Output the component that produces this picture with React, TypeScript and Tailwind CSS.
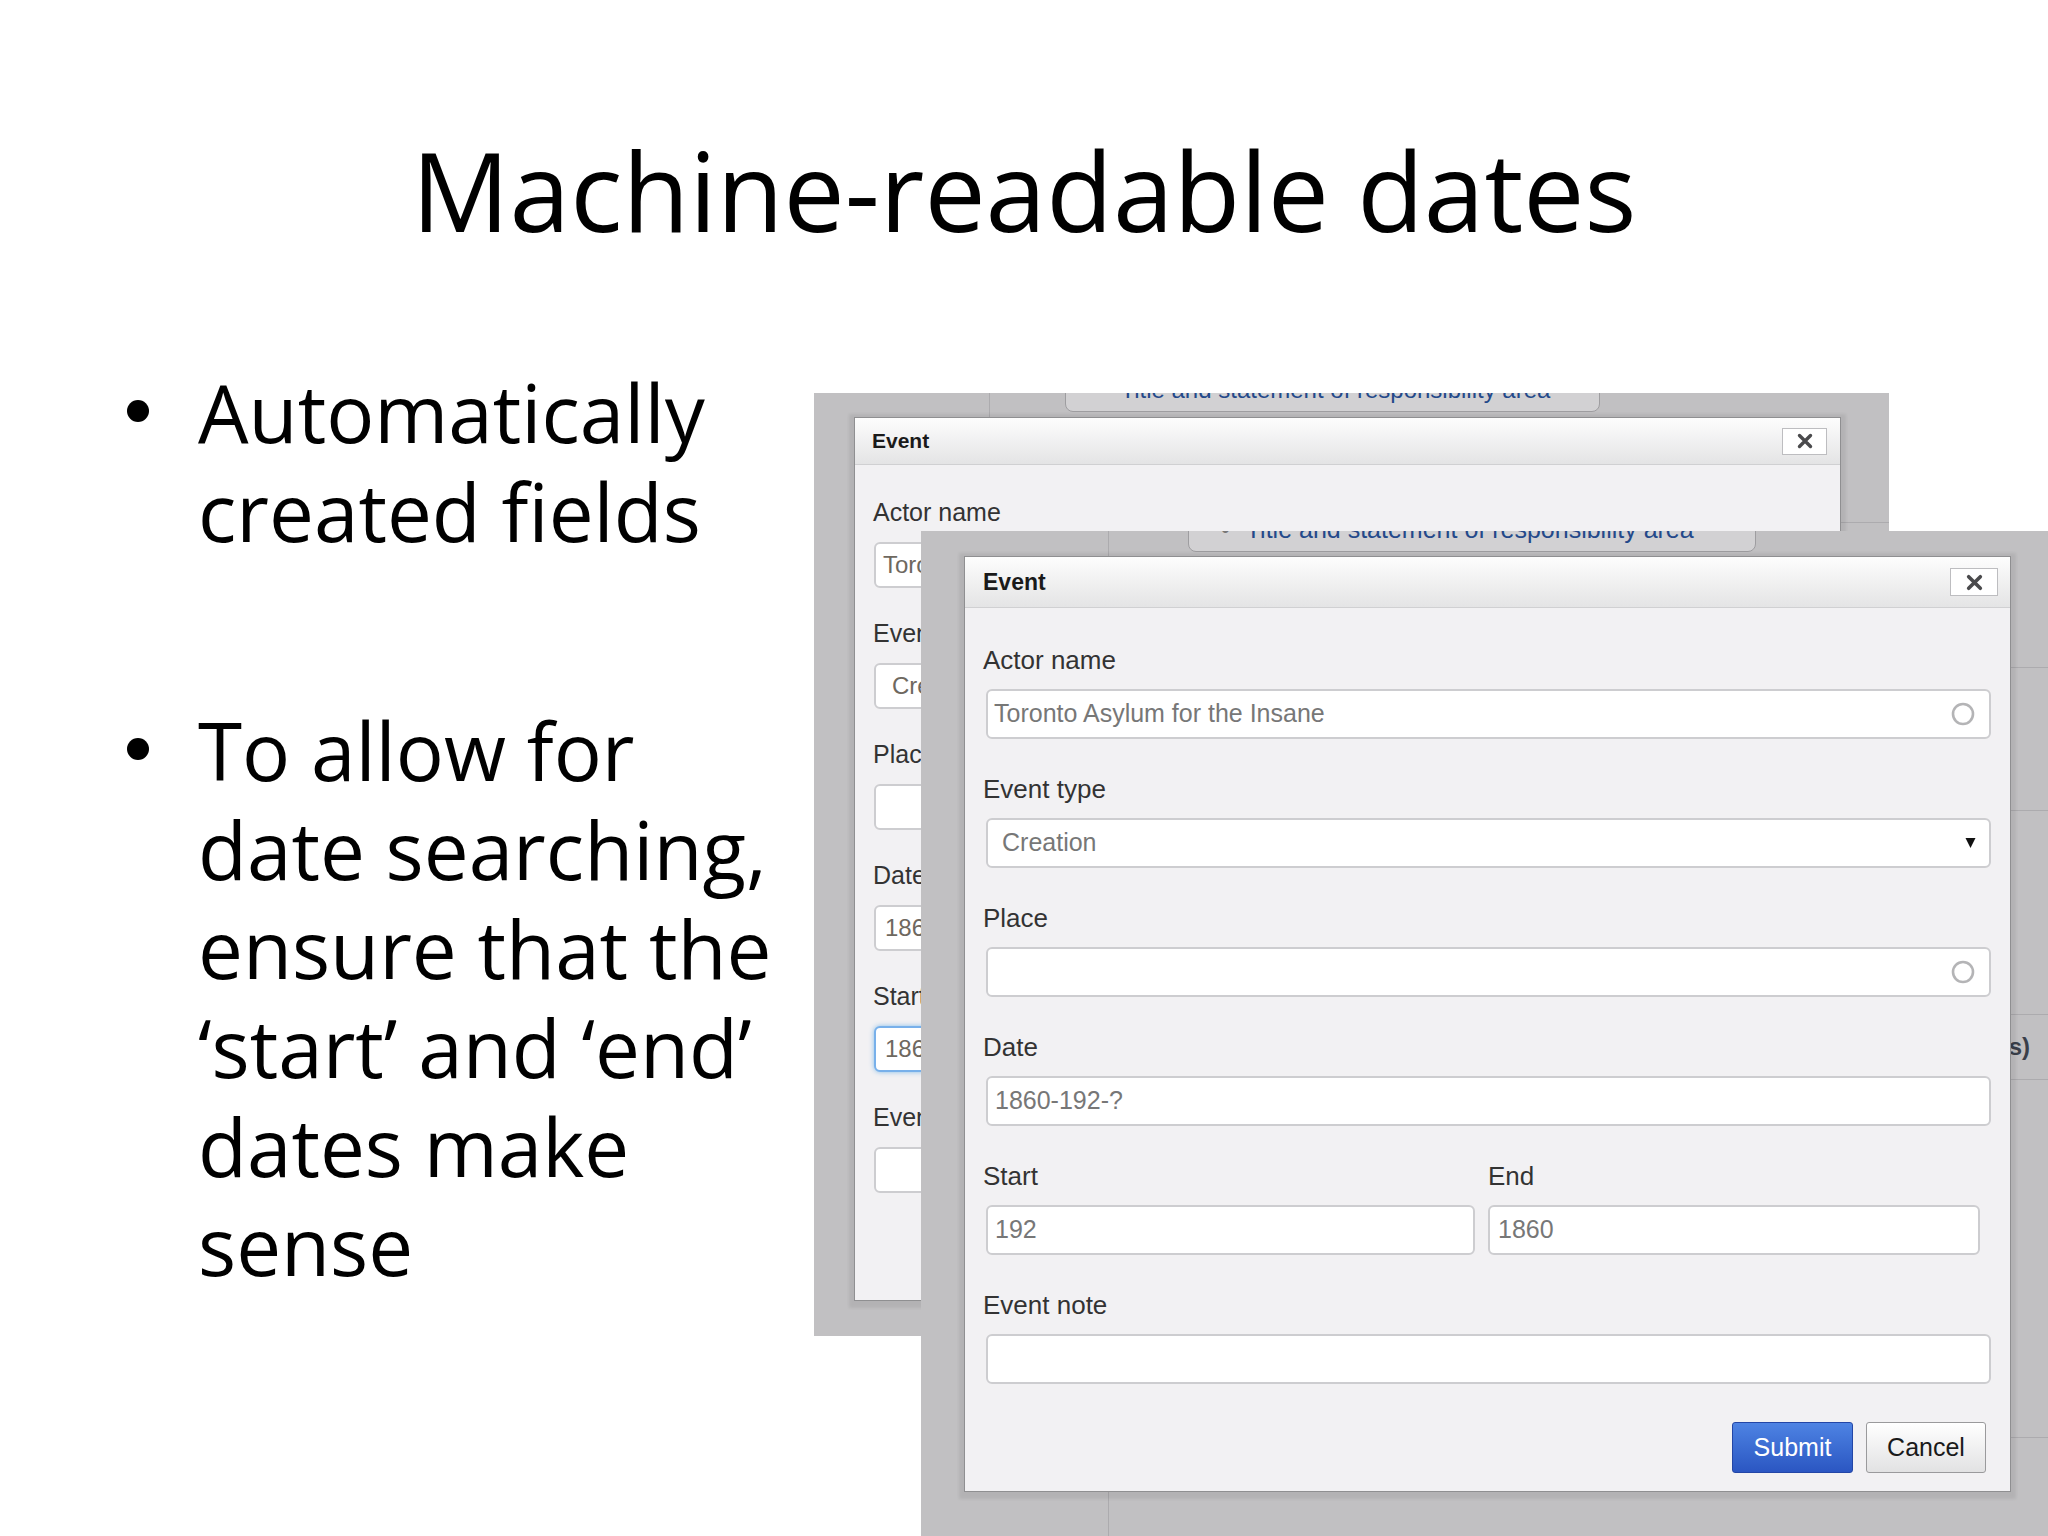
function CloseButton({ big }: { big?: boolean }) {
  return (
    <div
      className={
        big
          ? "flex h-[28px] w-[48px] items-center justify-center border border-[#bdbdc0] bg-white"
          : "flex h-[27px] w-[45px] items-center justify-center border border-[#bdbdc0] bg-white"
      }
    >
      <svg width={big ? 17 : 16} height={big ? 17 : 16} viewBox="0 0 16 16">
        <path d="M2.5 2.5 13.5 13.5M13.5 2.5 2.5 13.5" stroke="#4a4a4c" strokeWidth="3.4" strokeLinecap="round" />
      </svg>
    </div>
  );
}

function LookupCircle() {
  return (
    <svg width="26" height="26" viewBox="0 0 26 26" className="ml-auto mr-[13px] shrink-0">
      <circle cx="13" cy="13" r="10" fill="none" stroke="#b4b4b6" strokeWidth="2.6" />
    </svg>
  );
}

function SelectArrow() {
  return (
    <svg width="11" height="12" viewBox="0 0 11 12" className="ml-auto mr-[13px] shrink-0">
      <path d="M0.5 1h10L5.5 11z" fill="#111" />
    </svg>
  );
}

// background page of the CMS behind each modal: left nav, a tab at the top, ruled rows
function TitleTab({ back }: { back?: boolean }) {
  return (
    <div
      className={
        back
          ? "ml-[75px] -mt-[21px] flex h-[40px] w-[535px] shrink-0 items-end rounded-b-[8px] border border-[#9e9da0] bg-[#d2d1d3] pb-[9px] pl-[30px] text-[24px] leading-none text-[#24498a]"
          : "ml-[79px] -mt-[21px] flex h-[42px] w-[568px] shrink-0 items-end rounded-b-[8px] border border-[#9e9da0] bg-[#d2d1d3] pb-[9px] pl-[32px] text-[25px] leading-none text-[#24498a]"
      }
    >
      <span className="mr-[16px] text-[#777]">•</span>
      Title and statement of responsibility area
    </div>
  );
}

function BackShot() {
  return (
    <div className="relative h-[943px] w-[1075px] overflow-hidden bg-[#c1c0c2] font-['Liberation_Sans',Arial,sans-serif]">
      <div className="flex h-full">
        <div className="h-full w-[176px] shrink-0 border-r border-[#acabae]" />
        <div className="flex flex-1 flex-col">
          <TitleTab back />
          <div className="h-[111px] shrink-0 border-b border-[#acabae]" />
        </div>
      </div>

      {/* modal, sits over the page */}
      <div className="absolute left-[40px] top-[24px] flex h-[884px] w-[987px] flex-col border border-[#8f8f91] bg-[#f2f1f3] shadow-[0_2px_3px_5px_rgba(0,0,0,0.07)]">
        <div className="flex h-[47px] shrink-0 items-center justify-between border-b border-[#d0d0d2] bg-gradient-to-b from-[#fdfdfd] to-[#e4e4e5] pl-[17px] pr-[13px]">
          <span className="text-[21px] font-bold text-[#1a1a1a]">Event</span>
          <CloseButton />
        </div>
        <div className="flex flex-col pl-[18px] pr-[18px] pt-[33px] text-[#333]">
          <div className="mb-[16px] text-[25px] leading-[28px]">Actor name</div>
          <div className="mb-[31px] ml-[1px] flex h-[46px] items-center rounded-[6px] border-2 border-[#cdcdd0] bg-white pl-[7px] text-[24px] text-[#6e685f]">
            Toronto Asylum for the Insane
          </div>
          <div className="mb-[16px] text-[25px] leading-[28px]">Event type</div>
          <div className="mb-[31px] ml-[1px] flex h-[46px] items-center rounded-[6px] border-2 border-[#cdcdd0] bg-white pl-[16px] text-[24px] text-[#6e685f]">
            Creation
          </div>
          <div className="mb-[16px] text-[25px] leading-[28px]">Place</div>
          <div className="mb-[31px] ml-[1px] h-[46px] rounded-[6px] border-2 border-[#cdcdd0] bg-white" />
          <div className="mb-[16px] text-[25px] leading-[28px]">Date</div>
          <div className="mb-[31px] ml-[1px] flex h-[46px] items-center rounded-[6px] border-2 border-[#cdcdd0] bg-white pl-[9px] text-[24px] text-[#6e685f]">
            1860-192-?
          </div>
          <div className="mb-[31px] mr-[11px] grid grid-cols-2 gap-x-[13px]">
            <div className="mb-[16px] text-[25px] leading-[28px]">Start</div>
            <div className="mb-[16px] text-[25px] leading-[28px]">End</div>
            <div className="ml-[1px] flex h-[46px] items-center rounded-[6px] border-2 border-[#78b0ea] bg-white pl-[9px] text-[24px] text-[#6e685f] shadow-[0_0_5px_rgba(102,175,233,0.8)]">
              1860
            </div>
            <div className="flex h-[46px] items-center rounded-[6px] border-2 border-[#cdcdd0] bg-white pl-[9px] text-[24px] text-[#6e685f]">
              1860
            </div>
          </div>
          <div className="mb-[16px] text-[25px] leading-[28px]">Event note</div>
          <div className="ml-[1px] h-[46px] rounded-[6px] border-2 border-[#cdcdd0] bg-white" />
        </div>
      </div>
    </div>
  );
}

function FrontShot() {
  return (
    <div className="absolute left-[107px] top-[138px] h-[1005px] w-[1127px] overflow-hidden bg-[#c1c0c2] font-['Liberation_Sans',Arial,sans-serif]">
      <div className="flex h-full">
        <div className="h-full w-[188px] shrink-0 border-r border-[#acabae]" />
        <div className="flex flex-1 flex-col">
          <TitleTab />
          <div className="h-[116px] shrink-0 border-b border-[#acabae]" />
          <div className="h-[143px] shrink-0 border-b border-[#acabae]" />
          <div className="h-[204px] shrink-0 border-b border-[#acabae]" />
          <div className="flex h-[65px] shrink-0 items-center justify-end border-b border-[#acabae] pr-[18px] text-[24px] font-bold text-[#3a3f4a]">
            Creator(s)
          </div>
          <div className="h-[358px] shrink-0 border-b border-[#acabae]" />
        </div>
      </div>

      <div className="absolute left-[43px] top-[25px] flex h-[936px] w-[1047px] flex-col border border-[#8f8f91] bg-[#f2f1f3] shadow-[0_2px_3px_5px_rgba(0,0,0,0.07)]">
        <div className="flex h-[51px] shrink-0 items-center justify-between border-b border-[#d0d0d2] bg-gradient-to-b from-[#fdfdfd] to-[#e4e4e5] pl-[18px] pr-[12px]">
          <span className="text-[23px] font-bold text-[#1a1a1a]">Event</span>
          <CloseButton big />
        </div>
        <div className="flex flex-col pl-[18px] pr-[19px] pt-[37px] text-[#333]">
          <div className="mb-[14px] text-[26px] leading-[30px]">Actor name</div>
          <div className="mb-[35px] ml-[3px] flex h-[50px] items-center rounded-[6px] border-2 border-[#cdcdd0] bg-white pl-[6px] text-[25px] text-[#777]">
            Toronto Asylum for the Insane
            <LookupCircle />
          </div>
          <div className="mb-[14px] text-[26px] leading-[30px]">Event type</div>
          <div className="mb-[35px] ml-[3px] flex h-[50px] items-center rounded-[6px] border-2 border-[#cdcdd0] bg-white pl-[14px] text-[25px] text-[#777]">
            Creation
            <SelectArrow />
          </div>
          <div className="mb-[14px] text-[26px] leading-[30px]">Place</div>
          <div className="mb-[35px] ml-[3px] flex h-[50px] items-center rounded-[6px] border-2 border-[#cdcdd0] bg-white">
            <LookupCircle />
          </div>
          <div className="mb-[14px] text-[26px] leading-[30px]">Date</div>
          <div className="mb-[35px] ml-[3px] flex h-[50px] items-center rounded-[6px] border-2 border-[#cdcdd0] bg-white pl-[7px] text-[25px] text-[#777]">
            1860-192-?
          </div>
          <div className="mb-[35px] mr-[11px] grid grid-cols-2 gap-x-[13px]">
            <div className="mb-[14px] text-[26px] leading-[30px]">Start</div>
            <div className="mb-[14px] text-[26px] leading-[30px]">End</div>
            <div className="ml-[3px] flex h-[50px] items-center rounded-[6px] border-2 border-[#cdcdd0] bg-white pl-[7px] text-[25px] text-[#777]">
              192
            </div>
            <div className="flex h-[50px] items-center rounded-[6px] border-2 border-[#cdcdd0] bg-white pl-[8px] text-[25px] text-[#777]">
              1860
            </div>
          </div>
          <div className="mb-[14px] text-[26px] leading-[30px]">Event note</div>
          <div className="ml-[3px] h-[50px] rounded-[6px] border-2 border-[#cdcdd0] bg-white" />

          <div className="mr-[5px] mt-[38px] flex justify-end gap-[13px]">
            <button className="h-[51px] w-[121px] rounded-[3px] border border-[#2346a6] bg-gradient-to-b from-[#4e83e3] to-[#2b56c2] text-[25px] text-white">
              Submit
            </button>
            <button className="h-[51px] w-[120px] rounded-[3px] border border-[#9a9a9c] bg-gradient-to-b from-white to-[#e2e2e3] text-[25px] text-[#1a1a1a]">
              Cancel
            </button>
          </div>
        </div>
      </div>
    </div>
  );
}

export default function App() {
  return (
    <div className="relative h-[1536px] w-[2048px] overflow-hidden bg-white font-['Open_Sans',sans-serif] text-black">
      <h1 className="pt-[135px] text-center text-[109px] font-normal leading-[109px]">
        Machine-readable dates
      </h1>

      <div className="flex items-start">
        <ul className="mt-[118px] w-[814px] shrink-0 pl-[127px] text-[80px] leading-[99px]">
          <li className="flex">
            <span className="mt-[38px] mr-[49px] h-[22px] w-[22px] shrink-0 rounded-full bg-black" />
            <div>
              <div className="whitespace-nowrap">Automatically</div>
              <div className="whitespace-nowrap">created fields</div>
            </div>
          </li>
          <li className="mt-[140px] flex">
            <span className="mt-[38px] mr-[49px] h-[22px] w-[22px] shrink-0 rounded-full bg-black" />
            <div>
              <div className="whitespace-nowrap">To allow for</div>
              <div className="whitespace-nowrap">date searching,</div>
              <div className="whitespace-nowrap">ensure that the</div>
              <div className="whitespace-nowrap">‘start’ and ‘end’</div>
              <div className="whitespace-nowrap">dates make</div>
              <div className="whitespace-nowrap">sense</div>
            </div>
          </li>
        </ul>

        <div className="relative mt-[149px] shrink-0">
          <BackShot />
          <FrontShot />
        </div>
      </div>
    </div>
  );
}
